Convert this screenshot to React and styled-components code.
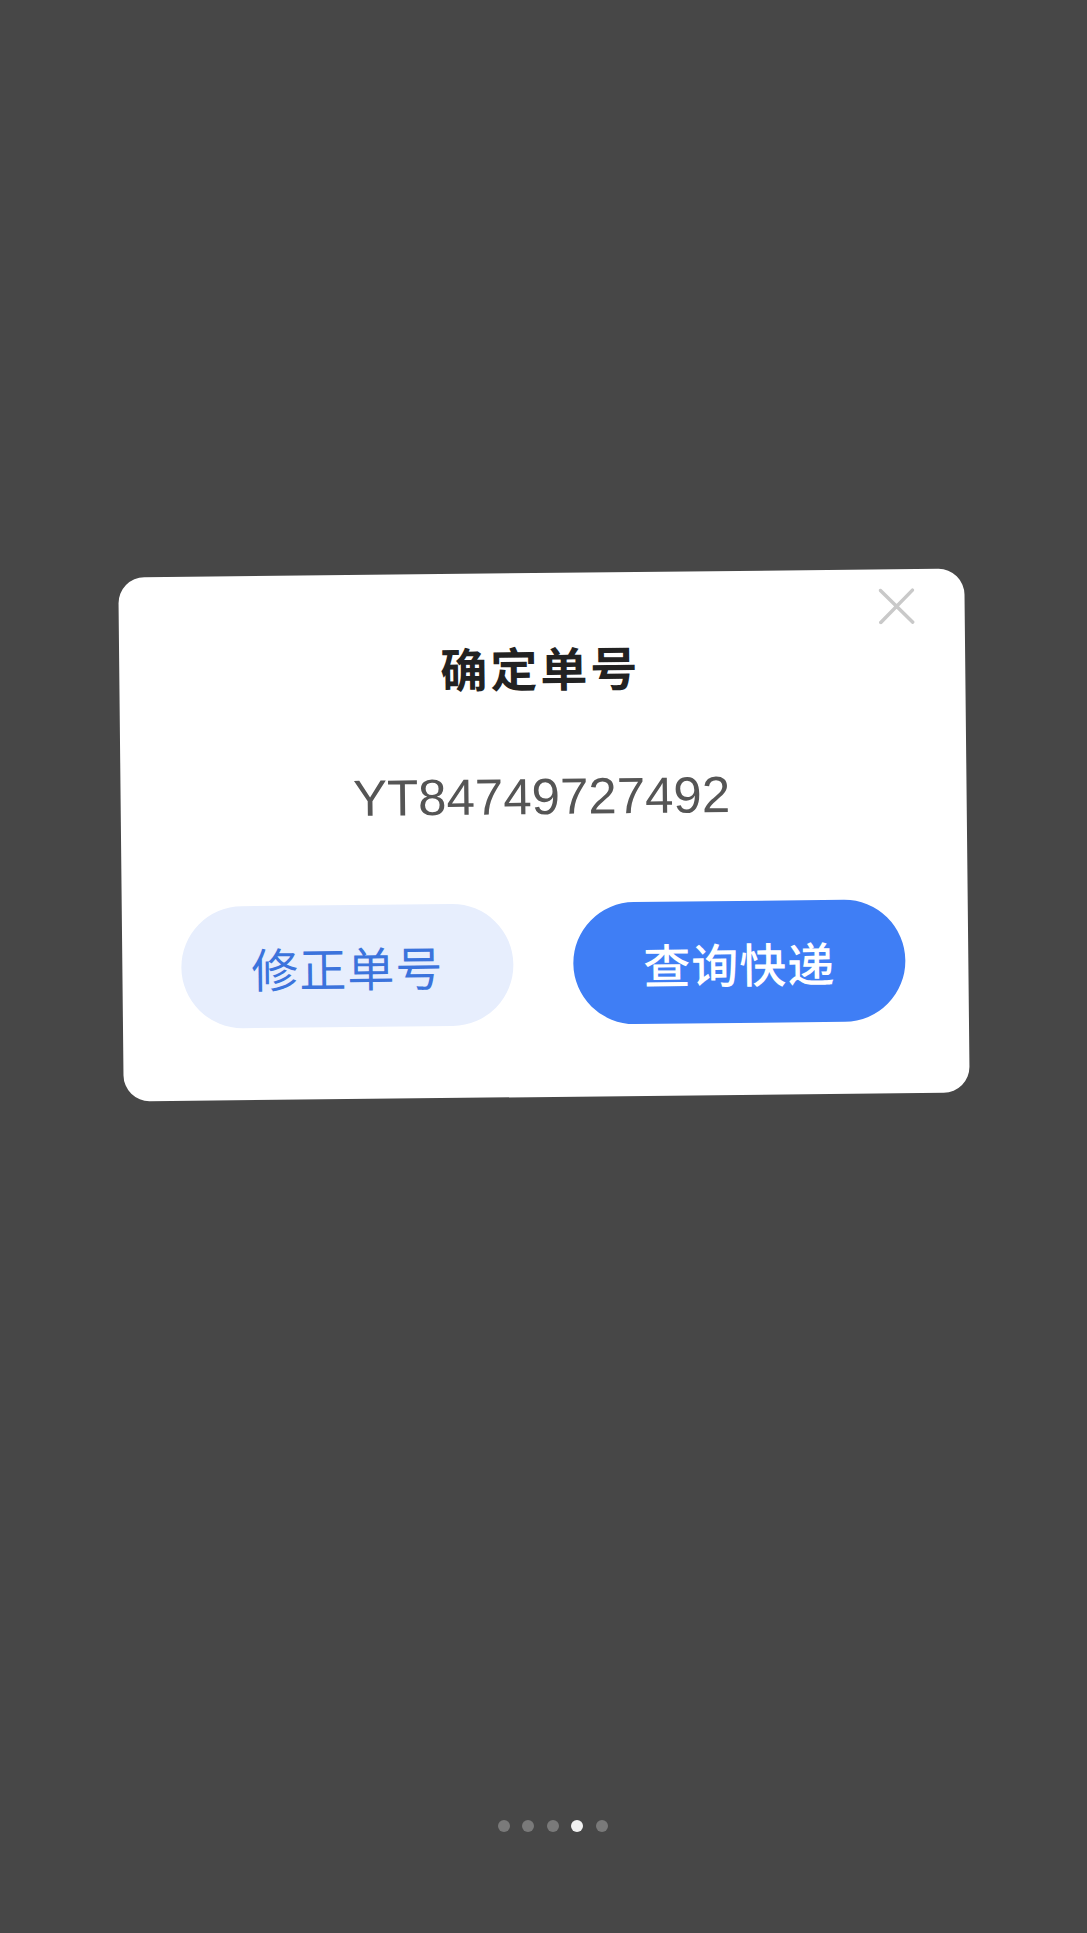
import React from 'react';
import styled, { createGlobalStyle } from 'styled-components';

const GlobalStyle = createGlobalStyle`
  html, body {
    margin: 0;
    padding: 0;
    background-color: #474747;
  }
  body {
    font-family: "Noto Sans CJK SC", "Noto Sans", sans-serif;
  }
`;

const Screen = styled.div`
  position: relative;
  width: 100%;
  height: 100vh;
  display: flex;
  flex-direction: column;
  align-items: center;
  background-color: #474747;
  overflow: hidden;
`;

const Dialog = styled.div`
  position: relative;
  margin-top: 573px;
  width: 846px;
  box-sizing: border-box;
  padding: 62px 63px 72px 59px;
  background-color: #fff;
  border-radius: 26px;
  transform: rotate(-0.6deg);
  display: flex;
  flex-direction: column;
  align-items: center;
`;

const CloseButton = styled.button`
  position: absolute;
  top: 19px;
  right: 50px;
  width: 36px;
  height: 36px;
  padding: 0;
  border: none;
  background: none;
  cursor: pointer;
`;

const Title = styled.h2`
  margin: 0;
  font-size: 47px;
  line-height: 64px;
  font-weight: 700;
  color: #222;
  letter-spacing: 3px;
`;

const Number = styled.div`
  margin-top: 68px;
  font-family: "Liberation Sans", Arial, sans-serif;
  font-size: 51px;
  line-height: 60px;
  color: #555;
`;

const Actions = styled.div`
  margin-top: 76px;
  width: 100%;
  display: grid;
  grid-template-columns: 1fr 1fr;
  gap: 60px;
`;

const ActionButton = styled.button`
  height: 122px;
  border: none;
  border-radius: 61px;
  font-family: "Noto Sans CJK SC", "Noto Sans", sans-serif;
  font-size: 47px;
  font-weight: ${({ primary }) => (primary ? 500 : 400)};
  letter-spacing: 1px;
  color: ${({ primary }) => (primary ? '#fff' : '#3b73dc')};
  background-color: ${({ primary }) => (primary ? '#3f7ef5' : '#e7eefd')};
  cursor: pointer;
`;

const Pager = styled.div`
  position: absolute;
  left: 0;
  right: 0;
  top: 1820px;
  display: flex;
  justify-content: center;
  gap: 12.5px;
  padding-left: 18px;
`;

const Dot = styled.span`
  width: 12px;
  height: 12px;
  border-radius: 50%;
  background-color: ${({ active }) => (active ? '#f2f2f2' : '#7a7a7a')};
`;

const CloseIcon = () => (
  <svg width="36" height="36" viewBox="0 0 36 36" fill="none">
    <path d="M2 2 L34 34 M34 2 L2 34" stroke="#c9c9c9" strokeWidth="3.5" strokeLinecap="round" />
  </svg>
);

const App = () => {
  const trackingNo = 'YT84749727492';
  const pages = [0, 1, 2, 3, 4];
  const current = 3;

  return (
    <Screen>
      <GlobalStyle />
      <Dialog>
        <CloseButton aria-label="关闭">
          <CloseIcon />
        </CloseButton>
        <Title>确定单号</Title>
        <Number>{trackingNo}</Number>
        <Actions>
          <ActionButton>修正单号</ActionButton>
          <ActionButton primary>查询快递</ActionButton>
        </Actions>
      </Dialog>
      <Pager>
        {pages.map((p) => (
          <Dot key={p} active={p === current} />
        ))}
      </Pager>
    </Screen>
  );
};

export default App;
